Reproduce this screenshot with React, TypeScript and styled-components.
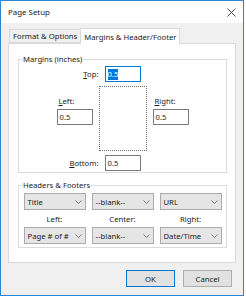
import styled, { createGlobalStyle } from "styled-components";

const GlobalStyle = createGlobalStyle`
  html, body {
    margin: 0;
    padding: 0;
    background: #ffffff;
  }
  body {
    font-family: "Noto Sans", "Open Sans", sans-serif;
    font-size: 7.7px;
    color: #1a1a1a;
  }
`;

const Window = styled.div`
  box-sizing: border-box;
  width: 244px;
  height: 296px;
  border: 1px solid #2b86d6;
  display: flex;
  flex-direction: column;
  background: #f0f0f0;
`;

const TitleBar = styled.div`
  height: 22px;
  background: #ffffff;
  display: flex;
  align-items: center;
  justify-content: space-between;
  padding: 0 7px 0 7px;
  font-size: 7.9px;
`;

const Body = styled.div`
  flex: 1;
  display: flex;
  flex-direction: column;
  padding: 5px 7px 0 7px;
`;

const TabRow = styled.div`
  display: flex;
  align-items: flex-end;
  height: 15px;
  padding-left: 1px;
  position: relative;
  z-index: 1;
`;

const Tab = styled.div<{ $active?: boolean }>`
  box-sizing: border-box;
  display: flex;
  align-items: center;
  padding: 0 3px;
  height: ${({ $active }) => ($active ? "16px" : "14px")};
  margin-bottom: ${({ $active }) => ($active ? "-1px" : "0")};
  background: ${({ $active }) => ($active ? "#ffffff" : "#f0f0f0")};
  border: 1px solid #d9d9d9;
  border-bottom: ${({ $active }) => ($active ? "none" : "1px solid #d9d9d9")};
  border-right: ${({ $active }) => ($active ? "1px solid #d9d9d9" : "none")};
  white-space: nowrap;
`;

const Panel = styled.div`
  box-sizing: border-box;
  height: 220px;
  background: #ffffff;
  border: 1px solid #d9d9d9;
  padding: 10px 8px 0 9px;
  display: flex;
  flex-direction: column;
  gap: 7px;
`;

const Group = styled.fieldset<{ $pad: string }>`
  margin: 0;
  min-width: 0;
  border: 1px solid #dcdcdc;
  padding: ${({ $pad }) => $pad};
  legend {
    padding: 0 1px;
    margin-left: 3px;
    line-height: 11px;
  }
`;

const MarginGrid = styled.div`
  display: grid;
  grid-template-columns: 36px 6px 48px 6px 36px;
  grid-template-rows: 16px 65px 16px;
  row-gap: 4px;
  justify-content: center;
`;

const SideLabel = styled.label<{ $col: string }>`
  grid-column: ${({ $col }) => $col};
  align-self: center;
  justify-self: end;
  padding-right: 6px;
  margin-right: -6px;
`;

const Field = styled.div<{ $focused?: boolean }>`
  box-sizing: border-box;
  width: 36px;
  height: 16px;
  background: #fff;
  border: 1px solid ${({ $focused }) => ($focused ? "#0078d7" : "#7a7a7a")};
  display: flex;
  align-items: center;
  padding-left: 2px;
`;

const Selected = styled.span`
  background: #0078d7;
  color: #fff;
  line-height: 11px;
`;

const CenterCell = styled.div`
  grid-column: 3;
  justify-self: center;
  align-self: center;
`;

const SideColumn = styled.div<{ $col: number }>`
  grid-column: ${({ $col }) => $col};
  grid-row: 2;
  display: flex;
  flex-direction: column;
  gap: 3px;
  padding-top: 10px;
  label {
    padding-left: 2px;
  }
`;

const Preview = styled.div`
  grid-column: 3;
  grid-row: 2;
  border: 1px dotted #6d6d6d;
`;

const HFGrid = styled.div`
  display: grid;
  grid-template-columns: repeat(3, 62px);
  grid-template-rows: 17px 17px 17px;
  column-gap: 6px;
  justify-content: center;
`;

const Caption = styled.div`
  text-align: center;
  align-self: center;
`;

const Select = styled.div`
  box-sizing: border-box;
  height: 17px;
  background: #e5e5e5;
  border: 1px solid #acacac;
  display: flex;
  align-items: center;
  justify-content: space-between;
  padding: 0 3px 0 3px;
  white-space: nowrap;
`;

const ButtonRow = styled.div`
  display: flex;
  justify-content: flex-end;
  gap: 8px;
  padding: 7px 4px 0 0;
`;

const Button = styled.div<{ $default?: boolean }>`
  box-sizing: border-box;
  width: 49px;
  height: 17px;
  background: #e1e1e1;
  border: 1px solid ${({ $default }) => ($default ? "#0078d7" : "#adadad")};
  display: flex;
  align-items: center;
  justify-content: center;
`;

const Chevron = () => (
  <svg width="7" height="4" viewBox="0 0 7 4">
    <polyline points="0.5,0.5 3.5,3.5 6.5,0.5" fill="none" stroke="#6d6d6d" strokeWidth="0.9" />
  </svg>
);

const CloseIcon = () => (
  <svg width="9" height="9" viewBox="0 0 9 9">
    <path d="M0.5 0.5 L8.5 8.5 M8.5 0.5 L0.5 8.5" stroke="#333" strokeWidth="0.9" />
  </svg>
);

const selects = [
  ["Title", "--blank--", "URL"],
  ["Page # of #", "--blank--", "Date/Time"],
];

export default function App() {
  return (
    <>
      <GlobalStyle />
      <Window>
        <TitleBar>
          <span>Page Setup</span>
          <CloseIcon />
        </TitleBar>
        <Body>
          <TabRow>
            <Tab>Format &amp; Options</Tab>
            <Tab $active>Margins &amp; Header/Footer</Tab>
          </TabRow>
          <Panel>
            <Group $pad="1px 0 1px 0">
              <legend>Margins (inches)</legend>
              <MarginGrid>
                <SideLabel $col="1 / 3">
                  <u>T</u>op:
                </SideLabel>
                <CenterCell>
                  <Field $focused>
                    <Selected>0.5</Selected>
                  </Field>
                </CenterCell>
                <SideColumn $col={1}>
                  <label>
                    <u>L</u>eft:
                  </label>
                  <Field>0.5</Field>
                </SideColumn>
                <Preview />
                <SideColumn $col={5}>
                  <label>
                    <u>R</u>ight:
                  </label>
                  <Field>0.5</Field>
                </SideColumn>
                <SideLabel $col="1 / 3">
                  <u>B</u>ottom:
                </SideLabel>
                <CenterCell>
                  <Field>0.5</Field>
                </CenterCell>
              </MarginGrid>
            </Group>
            <Group $pad="2px 0 3px 0">
              <legend>Headers &amp; Footers</legend>
              <HFGrid>
                {selects[0].map((s) => (
                  <Select key={"a" + s}>
                    {s}
                    <Chevron />
                  </Select>
                ))}
                <Caption>Left:</Caption>
                <Caption>Center:</Caption>
                <Caption>Right:</Caption>
                {selects[1].map((s) => (
                  <Select key={"b" + s}>
                    {s}
                    <Chevron />
                  </Select>
                ))}
              </HFGrid>
            </Group>
          </Panel>
          <ButtonRow>
            <Button $default>OK</Button>
            <Button>Cancel</Button>
          </ButtonRow>
        </Body>
      </Window>
    </>
  );
}
